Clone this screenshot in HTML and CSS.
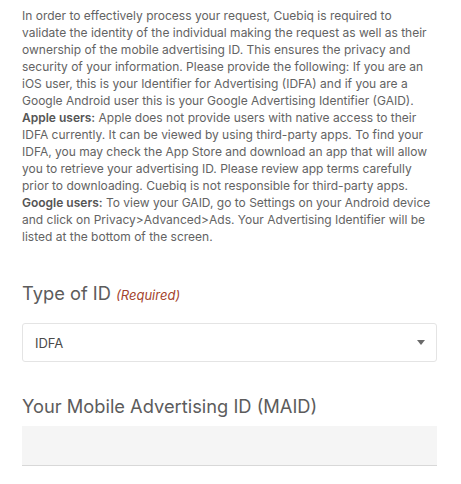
FILE: index.html
```html
<!DOCTYPE html>
<html>
<head>
<meta charset="utf-8">
<link rel="stylesheet" href="styles.css">
</head>
<body>
<div class="page">
  <p class="intro">In order to effectively process your request, Cuebiq is required to validate the identity of the individual making the request as well as their ownership of the mobile advertising ID. This ensures the privacy and security of your information. Please provide the following: If you are an iOS user, this is your Identifier for Advertising (IDFA) and if you are a Google Android user this is your Google Advertising Identifier (GAID). <b>Apple users:</b> Apple does not provide users with native access to their IDFA currently. It can be viewed by using third-party apps. To find your IDFA, you may check the App Store and download an app that will allow you to retrieve your advertising ID. Please review app terms carefully prior to downloading. Cuebiq is not responsible for third-party apps. <b>Google users:</b> To view your GAID, go to Settings on your Android device and click on Privacy&gt;Advanced&gt;Ads. Your Advertising Identifier will be listed at the bottom of the screen.</p>

  <div class="field field-type">
    <div class="label">Type of ID <span class="req">(Required)</span></div>
    <div class="select">
      <span class="select-value">IDFA</span>
      <span class="caret"></span>
    </div>
  </div>

  <div class="field field-maid">
    <div class="label">Your Mobile Advertising ID (MAID)</div>
    <div class="input"></div>
  </div>
</div>
</body>
</html>
```
FILE: styles.css
```css
html, body {
  margin: 0;
  padding: 0;
  background: #ffffff;
}
.page {
  padding: 7px 24px 0 22px;
  font-family: Inter, "Noto Sans", sans-serif;
  color: #636363;
}
.intro {
  margin: 0;
  font-size: 12px;
  line-height: 17px;
}
.intro b {
  font-weight: 600;
  color: #555555;
}
.field-type {
  margin-top: 36px;
}
.label {
  font-size: 18.3px;
  line-height: 24px;
  color: #5c5c5c;
}
.req {
  font-size: 13px;
  font-style: italic;
  color: #a4442e;
}
.select {
  margin-top: 16px;
  height: 37px;
  border: 1px solid #e4e4e4;
  border-radius: 3px;
  display: flex;
  align-items: center;
  justify-content: space-between;
  padding: 0 11px 0 12px;
}
.select-value {
  font-size: 13px;
  color: #4a4a4a;
}
.caret {
  width: 0;
  height: 0;
  border-left: 4px solid transparent;
  border-right: 4px solid transparent;
  border-top: 5px solid #6a6a6a;
}
.field-maid {
  margin-top: 32px;
}
.field-maid .input {
  margin-top: 8px;
  height: 39px;
  background: #f5f5f5;
  border-bottom: 1px solid #d8d8d8;
}
```
